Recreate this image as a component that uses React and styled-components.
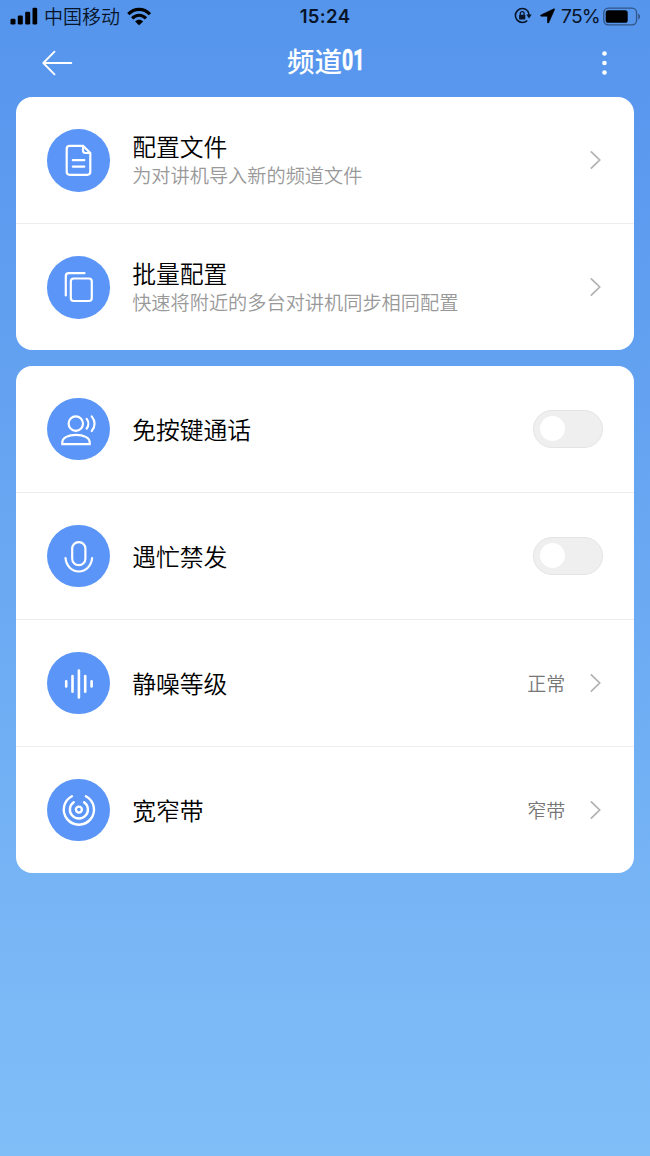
import React, {useState} from 'react';
import styled, {createGlobalStyle} from 'styled-components';

const GlobalStyle = createGlobalStyle`
    * {
        box-sizing: border-box;
    }
    body {
        margin: 0;
        font-family: "Noto Sans CJK SC", sans-serif;
    }
`

const Page = styled.div`
    width: 650px;
    height: 1156px;
    overflow: hidden;
    background: linear-gradient(180deg, #5695ec 0%, #5998ee 10%, #80bef8 100%);
`

// 상태바
const StatusBar = styled.div`
    display: grid;
    grid-template-columns: 1fr auto 1fr;
    align-items: center;
    height: 33px;
    padding: 0 9px 1px 10px;
    color: #081428;
`
const StatusLeft = styled.div`
    display: flex;
    align-items: center;
    svg {
        flex: none;
    }
`
const StatusRight = styled(StatusLeft)`
    justify-content: flex-end;
`
const Carrier = styled.span`
    margin: 0 7px 0 6px;
    font-size: 19px;
    font-weight: 350;
    line-height: 28px;
    white-space: nowrap;
`
const Clock = styled.span`
    margin-right: 1px;
    font: 600 18.5px/28px Inter, sans-serif;
    letter-spacing: 0.35px;
`
const Percent = styled.span`
    margin: 0 3px 0 6px;
    font: 400 19.3px/28px Inter, sans-serif;
    letter-spacing: -0.8px;
`

// 상단 헤더
const Header = styled.header`
    display: grid;
    grid-template-columns: 1fr auto 1fr;
    align-items: center;
    height: 64.3px;
    padding: 0 41px 5px;
    color: #fff;
`
const HeaderButton = styled.button`
    display: flex;
    justify-self: ${props => props.$end ? "end" : "start"};
    padding: 0;
    border: 0;
    background: none;
    color: inherit;
`
const Title = styled.h1`
    display: flex;
    margin: 0;
    padding-bottom: 5px;
    font-size: 27.5px;
    font-weight: 500;
    line-height: 40px;
`
const TitleNumber = styled.span`
    display: inline-block;
    width: 21px;
    font-family: Roboto, sans-serif;
    font-size: 29.5px;
    font-weight: 700;
    -webkit-text-stroke: 0.7px #fff;
    transform: scaleX(0.66);
    transform-origin: left center;
`

// 카드 목록
const Cards = styled.main`
    display: flex;
    flex-direction: column;
    gap: 15.5px;
    padding: 0 15.7px;
`
const Card = styled.section`
    border-radius: 16px;
    background: #fff;
    overflow: hidden;
`
const Row = styled.div`
    display: flex;
    align-items: center;
    height: 127px;
    padding: 0 31.5px;
    border-bottom: 1px solid #ededed;
    &:last-child {
        height: 126px;
        border-bottom: 0;
    }
`
const IconCircle = styled.div`
    flex: none;
    display: flex;
    width: 62.5px;
    height: 62.5px;
    margin-right: 22.5px;
    border-radius: 50%;
    background: #5b95f7;
    svg {
        width: 100%;
        height: 100%;
    }
`
const Texts = styled.div`
    flex: 1;
    display: flex;
    flex-direction: column;
`
const Name = styled.span`
    color: #000;
    font-size: 23.8px;
    font-weight: 350;
    line-height: 30px;
`
const Desc = styled.span`
    color: #999;
    font-size: 19.2px;
    font-weight: 350;
    line-height: 29px;
`
const Value = styled.span`
    margin-right: 21.5px;
    color: #777;
    font-size: 19px;
    font-weight: 350;
    line-height: 28px;
`
const Switch = styled.button`
    width: 70px;
    height: 38px;
    padding: 0 6px;
    border: 1px solid #e4e4e4;
    border-radius: 19px;
    background: ${props => props.$on ? "#5b95f7" : "#efefef"};
    display: flex;
    align-items: center;
    justify-content: ${props => props.$on ? "flex-end" : "flex-start"};
`
const Knob = styled.span`
    width: 25px;
    height: 25px;
    border-radius: 50%;
    background: #fff;
`

const LineIcon = ({children}) => (
    <svg viewBox="0 0 62.5 62.5" fill="none" stroke="#fff" strokeWidth="2.2" strokeLinecap="round" strokeLinejoin="round">
        {children}
    </svg>
);

const FileIcon = () => (
    <LineIcon>
        <path d="M36 16.8H22.7a3 3 0 0 0-3 3v23a3 3 0 0 0 3 3h17.6a3 3 0 0 0 3-3V24L36 16.8v4.8a2.4 2.4 0 0 0 2.4 2.4h4.9"/>
        <path d="M25.8 31.2h11.5M25.8 37.6h11.5"/>
    </LineIcon>
);

const CopyIcon = () => (
    <LineIcon>
        <rect x="23.8" y="22.5" width="21" height="22.5" rx="3"/>
        <path d="M18.8 39.5V20.2a3 3 0 0 1 3-3H37.5"/>
    </LineIcon>
);

const VoiceIcon = () => (
    <LineIcon>
        <circle cx="28.8" cy="25.6" r="7.2"/>
        <path strokeLinejoin="miter" d="M15.3 46.2v-1.7c0-4.8 6-7.6 13.7-7.6s13.7 2.8 13.7 7.6v1.7z"/>
        <path d="M39.7 20.9c2.1 2.8 2.1 6.8 0 9.6M44.7 18.4c3.8 4.4 3.8 10.2 0 14.6"/>
    </LineIcon>
);

const MicIcon = () => (
    <LineIcon>
        <rect x="25.2" y="17.2" width="13.2" height="23" rx="6.4"/>
        <path d="M18.5 33.2c.8 7.8 6.3 13.3 13.3 13.3s12.5-5.5 13.3-13.3"/>
    </LineIcon>
);

const WaveIcon = () => (
    <LineIcon>
        <path strokeWidth="2.6" d="M19.2 29.3v5.2M25.5 24v15.8M31.9 18.5v27M38.2 24v15.8M44.6 29.3v5.2"/>
    </LineIcon>
);

const BandIcon = () => (
    <LineIcon>
        <g strokeWidth="2.4">
            <circle cx="31.9" cy="30.6" r="3"/>
            <path d="M26.7 23.2a9 9 0 1 0 10.4 0"/>
            <path d="M24.9 17.2a15.1 15.1 0 1 0 14 0"/>
        </g>
    </LineIcon>
);

const Arrow = () => (
    <svg width="16" height="20" viewBox="0 0 16 20" fill="none" stroke="#b2b2b2" strokeWidth="1.7" strokeLinecap="round">
        <path d="M4.3 1.8L12.7 10L4.3 18.2"/>
    </svg>
);

const SignalIcon = () => (
    <svg width="28" height="18" viewBox="0 0 28 18" fill="#000">
        <rect x="0.5" y="11.7" width="5" height="5.8" rx="1.3"/>
        <rect x="7.8" y="8.5" width="5" height="9" rx="1.3"/>
        <rect x="15.2" y="4.7" width="5" height="12.8" rx="1.3"/>
        <rect x="22.5" y="0.8" width="4.7" height="16.7" rx="1.3"/>
    </svg>
);

const WifiIcon = () => (
    <svg width="24" height="19" viewBox="0 0 24 19" fill="none" stroke="#000" strokeWidth="3.2">
        <path d="M1.3 7.2C7.5 .7 16.7 .7 22.9 7.2"/>
        <path d="M5.2 11.3c4-4.1 9.8-4.1 13.8 0"/>
        <path fill="#000" stroke="none" d="M12.1 18.3L8.1 14.4c2.3-2.2 5.7-2.2 8 0z"/>
    </svg>
);

const LockIcon = () => (
    <svg width="18" height="18" viewBox="0 0 18 18" fill="none" stroke="#081428" strokeWidth="1.6">
        <path d="M13.3 3.5A7 7 0 1 0 13.3 13.5"/>
        <path d="M13.3 3.5A7 7 0 0 1 15 8"/>
        <path fill="#081428" stroke="none" d="M12.3 7.6h5.4L15 11.5z"/>
        <rect x="5.1" y="7.7" width="6.2" height="4.8" rx=".7" fill="#081428" stroke="none"/>
        <path strokeWidth="1.2" d="M6.3 8V6.5a1.9 1.9 0 0 1 3.8 0V8"/>
    </svg>
);

const LocationSvg = styled.svg`
    margin-left: 8px;
`
const LocationIcon = () => (
    <LocationSvg width="15" height="16" viewBox="0 0 15 16" fill="#000" stroke="#000" strokeWidth=".6">
        <path d="M14 .8c.4-.2.8.2.6.6L8.7 14.7c-.3.6-1.2.5-1.2-.2V8.2H1.1c-.7 0-.8-.9-.2-1.2z"/>
    </LocationSvg>
);

const BatteryIcon = () => (
    <svg width="38" height="19" viewBox="0 0 38 19">
        <rect x=".8" y="1.2" width="32.8" height="16.6" rx="4.5" fill="none" stroke="#315486" strokeWidth="1.3"/>
        <rect x="2.7" y="3.2" width="22" height="12.6" rx="2.6" fill="#000"/>
        <path d="M35.3 6.5c2.3.8 2.3 5.2 0 6z" fill="#315486"/>
    </svg>
);

const App = () => {

    // 스위치 상태
    const [handsFree, setHandsFree] = useState(false);
    const [busyLock, setBusyLock] = useState(false);

    return (
        <Page>
            <GlobalStyle/>
            <StatusBar>
                <StatusLeft>
                    <SignalIcon/>
                    <Carrier>中国移动</Carrier>
                    <WifiIcon/>
                </StatusLeft>
                <Clock>15:24</Clock>
                <StatusRight>
                    <LockIcon/>
                    <LocationIcon/>
                    <Percent>75%</Percent>
                    <BatteryIcon/>
                </StatusRight>
            </StatusBar>

            <Header>
                <HeaderButton aria-label="返回">
                    <svg width="32" height="26" viewBox="0 0 32 26" fill="none" stroke="#fff" strokeWidth="1.9" strokeLinecap="round" strokeLinejoin="round">
                        <path d="M13.5 1.7L2.3 13L13.5 24.3M2.3 13H30.3"/>
                    </svg>
                </HeaderButton>
                <Title>频道<TitleNumber>01</TitleNumber></Title>
                <HeaderButton $end aria-label="更多">
                    <svg width="8" height="26" viewBox="0 0 8 26" fill="#fff">
                        <circle cx="3.5" cy="3.5" r="2.3"/>
                        <circle cx="3.5" cy="13" r="2.3"/>
                        <circle cx="3.5" cy="22.5" r="2.3"/>
                    </svg>
                </HeaderButton>
            </Header>

            <Cards>
                <Card>
                    <Row>
                        <IconCircle><FileIcon/></IconCircle>
                        <Texts>
                            <Name>配置文件</Name>
                            <Desc>为对讲机导入新的频道文件</Desc>
                        </Texts>
                        <Arrow/>
                    </Row>
                    <Row>
                        <IconCircle><CopyIcon/></IconCircle>
                        <Texts>
                            <Name>批量配置</Name>
                            <Desc>快速将附近的多台对讲机同步相同配置</Desc>
                        </Texts>
                        <Arrow/>
                    </Row>
                </Card>
                <Card>
                    <Row>
                        <IconCircle><VoiceIcon/></IconCircle>
                        <Texts><Name>免按键通话</Name></Texts>
                        <Switch $on={handsFree} onClick={() => setHandsFree(!handsFree)}><Knob/></Switch>
                    </Row>
                    <Row>
                        <IconCircle><MicIcon/></IconCircle>
                        <Texts><Name>遇忙禁发</Name></Texts>
                        <Switch $on={busyLock} onClick={() => setBusyLock(!busyLock)}><Knob/></Switch>
                    </Row>
                    <Row>
                        <IconCircle><WaveIcon/></IconCircle>
                        <Texts><Name>静噪等级</Name></Texts>
                        <Value>正常</Value>
                        <Arrow/>
                    </Row>
                    <Row>
                        <IconCircle><BandIcon/></IconCircle>
                        <Texts><Name>宽窄带</Name></Texts>
                        <Value>窄带</Value>
                        <Arrow/>
                    </Row>
                </Card>
            </Cards>
        </Page>
    );
};

export default App;
